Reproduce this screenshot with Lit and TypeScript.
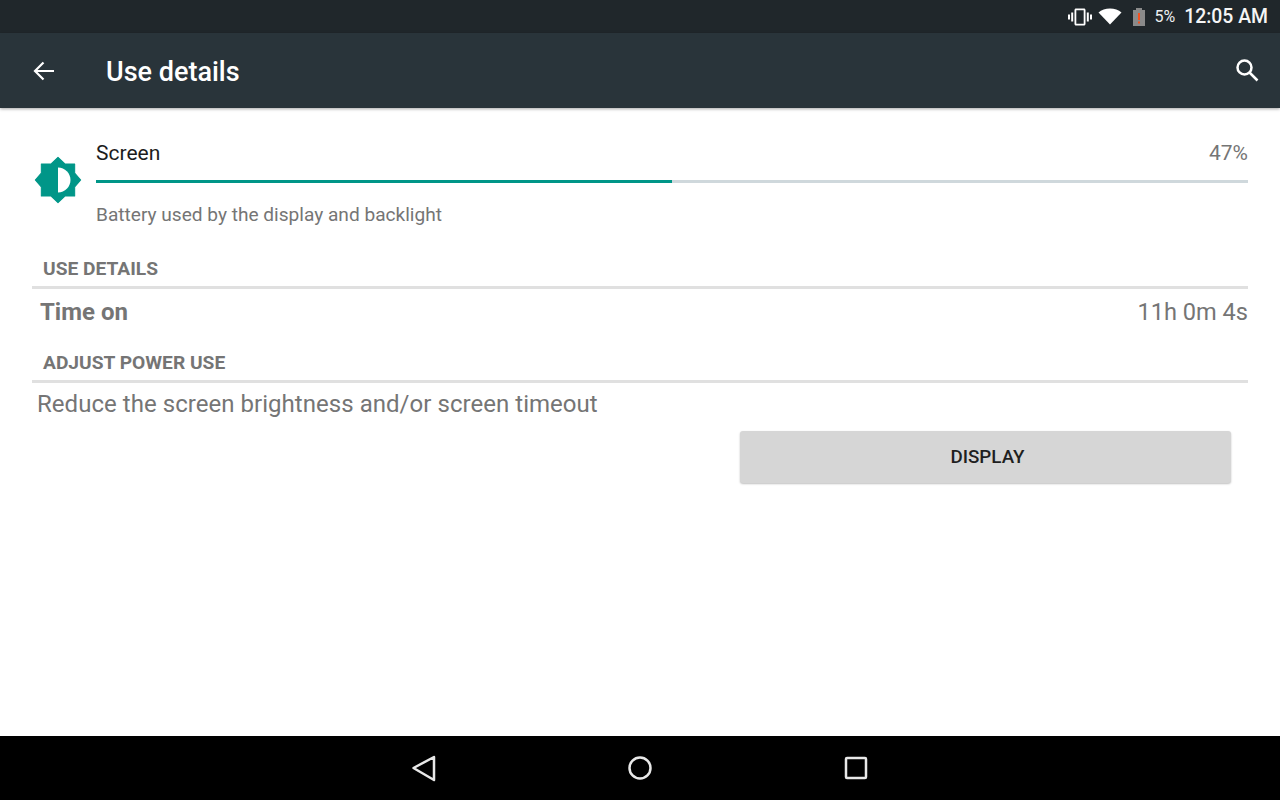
import { LitElement, html, css } from "lit";
import { customElement } from "lit/decorators.js";

@customElement("app-root")
export class AppRoot extends LitElement {
  static styles = css`
    :host { display: flex; flex-direction: column; width: 1280px; height: 800px; overflow: hidden; background: #fff; font-family: Roboto, "Liberation Sans", sans-serif; }
    svg { display: block; flex: none; }
    .status { height: 33px; flex: none; background: #20272b; display: flex; align-items: center; justify-content: flex-end; color: #fff; }
    .vib { margin-right: 6px; }
    .wifi { margin-right: 10px; }
    .batt { margin-right: 8px; }
    .pct { font-size: 16px; color: #eceff1; margin-right: 9px; line-height: 33px; }
    .clock { font-size: 19.4px; font-weight: 500; line-height: 33px; margin-right: 12px; color: #f5f5f5; }
    .bar { height: 75px; flex: none; background: #29343a; display: flex; align-items: center; box-shadow: 0 1px 3px rgba(0,0,0,.35); position: relative; z-index: 1; }
    .back { margin-left: 32px; }
    .title { margin-left: 50px; font-size: 27px; font-weight: 500; color: #fff; flex: 1; line-height: 75px; padding-top: 4px; box-sizing: border-box; }
    .search { margin-right: 18px; margin-top: -2px; }
    .main { flex: 1; padding: 0 32px; display: flex; flex-direction: column; }
    .head { display: flex; align-items: flex-start; height: 140px; }
    .head svg { margin: 47px 13px 0 1px; }
    .info { flex: 1; padding-top: 31px; }
    .line { display: flex; justify-content: space-between; height: 28px; line-height: 28px; font-size: 21px; color: #1c1c1c; }
    .pc { color: #757575; }
    .track { height: 3px; margin-top: 13px; background: #cfd8dc; }
    .fill { height: 3px; background: #009688; }
    .sub { font-size: 19.1px; color: #757575; line-height: 24px; margin-top: 20px; }
    .cat { font-size: 19.2px; font-weight: 700; color: #757575; padding-left: 11px; line-height: 24px; box-sizing: border-box; border-bottom: 3px solid #e0e0e0; }
    .cat1 { height: 41px; padding-top: 9px; }
    .row { display: flex; justify-content: space-between; height: 50px; padding-top: 7px; box-sizing: border-box; font-size: 24px; color: #757575; line-height: 32px; padding-left: 8px; }
    .row b { font-weight: 700; }
    .row span { font-size: 23.6px; }
    .cat2 { height: 44px; padding-top: 12px; }
    .desc { font-size: 24px; line-height: 32px; color: #757575; padding-left: 5px; margin-top: 5px; letter-spacing: 0.04px; }
    .btnwrap { display: flex; justify-content: flex-end; padding-right: 17px; margin-top: 11px; }
    .btn { width: 491px; height: 52px; padding-left: 4px; padding-bottom: 1px; box-sizing: border-box; background: #d6d6d6; border-radius: 3px; box-shadow: 0 1px 2px rgba(0,0,0,.25); display: flex; align-items: center; justify-content: center; font-size: 18.8px; font-weight: 500; color: #1f1f1f; }
    .nav { height: 64px; flex: none; background: #000; display: flex; align-items: center; justify-content: center; gap: 168px; }
  `;

  render() {
    return html`
      <div class="status">
        <svg class="vib" width="24" height="24" viewBox="0 0 24 24" fill="#fff"><path d="M0 9.5h2v5H0zM3.2 7.5h2v9h-2zM22 9.5h2v5h-2zM18.8 7.5h2v9h-2zM16 3.5H8c-.8 0-1.500.7-1.500 1.500v14c0 .8.700 1.500 1.500 1.500h8c.8 0 1.500-.7 1.500-1.500V5c0-.8-.7-1.500-1.500-1.500zm-.3 15.200H8.300V5.300h7.400z"/></svg>
        <svg class="wifi" width="24" height="20" viewBox="0 0 24 20" fill="#fff"><path d="M12 17.5 23.5 5.5C20.5 3 16.5 1.5 12 1.5S3.5 3 .5 5.5z"/></svg>
        <svg class="batt" width="14" height="20" viewBox="0 0 14 20"><path fill="#8a8a8a" d="M4 1h6v2h3v16H1V3h3z"/><rect x="6" y="6" width="2" height="7" fill="#f4511e"/><rect x="6" y="14.5" width="2" height="2" fill="#f4511e"/></svg>
        <span class="pct">5%</span>
        <span class="clock">12:05 AM</span>
      </div>
      <div class="bar">
        <svg class="back" width="24" height="24" viewBox="0 0 24 24" fill="none" stroke="#fff" stroke-width="2.2"><path d="M22 12H3M11.5 3.5 3 12l8.500 8.500"/></svg>
        <span class="title">Use details</span>
        <svg class="search" width="30" height="30" viewBox="0 0 30 30" fill="none" stroke="#fff" stroke-width="2.5"><circle cx="12.5" cy="12.5" r="7"/><path d="M17.5 17.5 25.5 25.5"/></svg>
      </div>
      <div class="main">
        <div class="head">
          <svg width="50" height="50" viewBox="0 0 24 24"><path fill="#009688" stroke="#009688" stroke-width=".5" stroke-linejoin="round" d="M20 15.31 22.9 12 20 8.690V4.300h-4.690L12 1.100 8.690 4.300H4v4.390L1.100 12 4 15.310V19.700h4.690L12 22.900 15.310 19.700H20z"/><path fill="#fff" d="M12 18V6c3.310 0 6 2.690 6 6s-2.690 6-6 6z"/></svg>
          <div class="info">
            <div class="line"><span>Screen</span><span class="pc">47%</span></div>
            <div class="track"><div class="fill" style="width: 50%"></div></div>
            <div class="sub">Battery used by the display and backlight</div>
          </div>
        </div>
        <div class="cat cat1">USE DETAILS</div>
        <div class="row"><b>Time on</b><span>11h 0m 4s</span></div>
        <div class="cat cat2">ADJUST POWER USE</div>
        <div class="desc">Reduce the screen brightness and/or screen timeout</div>
        <div class="btnwrap"><div class="btn">DISPLAY</div></div>
      </div>
      <div class="nav">
        <svg width="48" height="48" viewBox="0 0 48 48" fill="none" stroke="#e8e8e8" stroke-width="2.5" stroke-linejoin="round"><path d="M34 13 13.5 24 34 36z"/></svg>
        <svg width="48" height="48" viewBox="0 0 48 48" fill="none" stroke="#e8e8e8" stroke-width="2.5"><circle cx="24" cy="24" r="10.5"/></svg>
        <svg width="48" height="48" viewBox="0 0 48 48" fill="none" stroke="#e8e8e8" stroke-width="2.5" stroke-linejoin="round"><rect x="14" y="14" width="20" height="20" rx="1"/></svg>
      </div>
    `;
  }
}
